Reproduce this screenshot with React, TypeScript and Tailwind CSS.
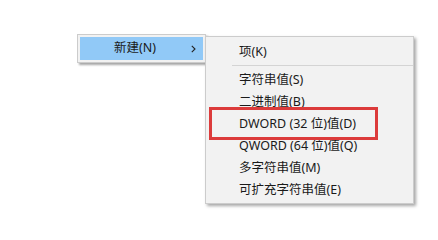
const font = { fontFamily: '"Noto Sans", "Noto Sans CJK SC", sans-serif' };

const items = [
  "字符串值(S)",
  "二进制值(B)",
  "DWORD (32 位)值(D)",
  "QWORD (64 位)值(Q)",
  "多字符串值(M)",
  "可扩充字符串值(E)",
];

function Chevron() {
  return (
    <svg width="5" height="8" viewBox="0 0 5 8" className="block">
      <path d="M0.8 0.8 L4 4 L0.8 7.2" fill="none" stroke="#222" strokeWidth="1.1" />
    </svg>
  );
}

export default function App() {
  return (
    <div className="w-[438px] h-[215px] bg-white overflow-hidden text-[12.5px] text-[#1a1a1a]" style={font}>
      <div className="flex items-start pt-[34px] pl-[77px]">
        <div className="w-[129px] border border-[#cccccc] bg-[#f2f2f2] p-[2px] shadow-[2px_2px_2px_rgba(0,0,0,0.35)]">
          <div className="flex items-center h-[23px] bg-[#91c9f7] pl-[34px] pr-[7px]">
            <span className="flex-1 leading-none">新建(N)</span>
            <Chevron />
          </div>
        </div>
        <div className="relative -ml-[1px] mt-[2px] w-[209px] border border-[#cccccc] bg-[#f2f2f2] pt-[4px] pb-[2px] shadow-[2px_2px_3px_rgba(0,0,0,0.35)]">
          <div className="flex items-center h-[22px] pl-[33px]">项(K)</div>
          <div className="pl-[26px] pt-[2px] pb-[3px]">
            <div className="h-px bg-[#d4d4d4]" />
          </div>
          {items.map((t) => (
            <div key={t} className="flex items-center h-[22px] pl-[33px]">
              {t}
            </div>
          ))}
          <div className="absolute left-[3px] top-[70px] w-[169px] h-[33px] border-[3px] border-[#dc3b3b]" />
        </div>
      </div>
    </div>
  );
}
